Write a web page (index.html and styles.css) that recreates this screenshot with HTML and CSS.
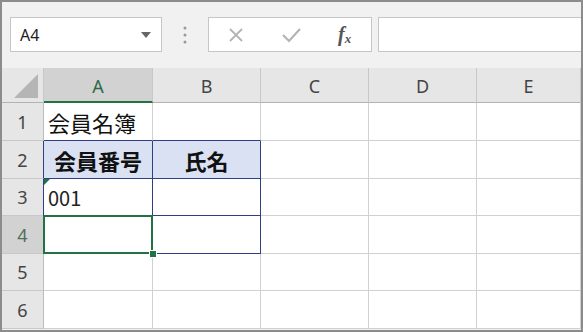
FILE: index.html
```html
<!doctype html>
<html>
    <head>
        <meta charset='utf-8'>
        <title>会員名簿</title>
        <link rel="stylesheet" href="styles.css">
    </head>
    <body>
        <div class='window'>
            <div class='toolbar'>
                <div class='namebox'>
                    <span>A4</span>
                    <svg width="10" height="6" viewBox="0 0 10 6"><path d="M0 0 L10 0 L5 6 Z" fill="#666"/></svg>
                </div>
                <div class='grip'>
                    <svg width="4" height="18" viewBox="0 0 4 18"><circle cx="2" cy="2" r="1.5" fill="#999"/><circle cx="2" cy="9" r="1.5" fill="#999"/><circle cx="2" cy="16" r="1.5" fill="#999"/></svg>
                </div>
                <div class='fxbtns'>
                    <svg width="16" height="16" viewBox="0 0 16 16"><path d="M2 2 L14 14 M14 2 L2 14" stroke="#b4b4b4" stroke-width="1.8" fill="none"/></svg>
                    <svg width="20" height="16" viewBox="0 0 20 16"><path d="M2 8 L8 14 L19 2" stroke="#b4b4b4" stroke-width="2.2" fill="none"/></svg>
                    <span class='fx'>f<sub>x</sub></span>
                </div>
                <div class='formula'></div>
            </div>
            <div class='sheet'>
                <div class='hd corner'>
                    <svg width="24" height="24" viewBox="0 0 24 24"><path d="M24 0 L24 24 L0 24 Z" fill="#b5b5b5"/></svg>
                </div>
                <div class='hd col active'>A</div>
                <div class='hd col'>B</div>
                <div class='hd col'>C</div>
                <div class='hd col'>D</div>
                <div class='hd col'>E</div>

                <div class='hd row'>1</div>
                <div class='cell tb-top'>会員名簿</div>
                <div class='cell tb-top'></div>
                <div class='cell'></div>
                <div class='cell'></div>
                <div class='cell'></div>

                <div class='hd row tb-left'>2</div>
                <div class='cell tb th'>会員番号</div>
                <div class='cell tb th'>氏名</div>
                <div class='cell'></div>
                <div class='cell'></div>
                <div class='cell'></div>

                <div class='hd row tb-left'>3</div>
                <div class='cell tb num'>001</div>
                <div class='cell tb'></div>
                <div class='cell'></div>
                <div class='cell'></div>
                <div class='cell'></div>

                <div class='hd row active'>4</div>
                <div class='cell tb selected'></div>
                <div class='cell tb'></div>
                <div class='cell'></div>
                <div class='cell'></div>
                <div class='cell'></div>

                <div class='hd row'>5</div>
                <div class='cell'></div>
                <div class='cell'></div>
                <div class='cell'></div>
                <div class='cell'></div>
                <div class='cell'></div>

                <div class='hd row'>6</div>
                <div class='cell'></div>
                <div class='cell'></div>
                <div class='cell'></div>
                <div class='cell'></div>
                <div class='cell'></div>
            </div>
        </div>
    </body>
</html>
```
FILE: styles.css
```css
html,body {
    margin:0;
    padding:0;
}
body {
    font-family:'Noto Sans','Noto Sans CJK JP',sans-serif;
    background:#fff;
}
.window {
    width:583px;
    height:332px;
    box-sizing:border-box;
    border:2px solid #8c8c8c;
    background:#f1f1f1;
    overflow:hidden;
}
.toolbar {
    height:66px;
    box-sizing:border-box;
    padding:15px 0 0 8px;
    display:flex;
    align-items:flex-start;
}
.namebox {
    width:152px;
    height:35px;
    box-sizing:border-box;
    border:1px solid #c6c6c6;
    background:#fff;
    display:flex;
    align-items:center;
    justify-content:space-between;
    padding:0 10px 0 9px;
    font-size:16px;
    color:#222;
}
.grip {
    width:46px;
    height:35px;
    display:flex;
    align-items:center;
    justify-content:center;
}
.fxbtns {
    width:164px;
    height:35px;
    box-sizing:border-box;
    border:1px solid #c6c6c6;
    background:#fff;
    display:flex;
    align-items:center;
    padding:0 0 0 19px;
    gap:37px;
}
.fx {
    font-family:'Liberation Serif',serif;
    font-style:italic;
    font-weight:bold;
    font-size:20px;
    color:#555;
}
.fx sub {
    font-size:13px;
    vertical-align:-2px;
}
.formula {
    flex:1;
    height:35px;
    box-sizing:border-box;
    margin-left:6px;
    border:1px solid #c6c6c6;
    border-right:none;
    background:#fff;
}
.sheet {
    display:grid;
    grid-template-columns:42px 109px 108px 108px 108px 1fr;
    grid-template-rows:35px 38px 38px 37px 38px 37px 38px;
    background:#fff;
}
.sheet > div {
    box-sizing:border-box;
    border-right:1px solid #d0d0d0;
    border-bottom:1px solid #d0d0d0;
}
.sheet .hd {
    background:#e6e6e6;
    color:#444;
    font-size:18px;
    display:flex;
    align-items:center;
    justify-content:center;
}
.sheet .col {
    border-right-color:#c8c8c8;
    border-bottom:1px solid #b3b3b3;
    padding-top:2px;
}
.sheet .col.active {
    background:#d2d2d2;
    border-bottom:2px solid #217346;
    color:#2d6a48;
}
.sheet .corner {
    justify-content:flex-end;
    align-items:flex-end;
    padding:0 5px 4px 0;
    border-bottom:1px solid #b3b3b3;
    border-right-color:#c8c8c8;
}
.sheet .corner svg {
    display:block;
}
.sheet .row {
    border-right:1px solid #bcbcbc;
    border-bottom-color:#c8c8c8;
}
.sheet .row.active {
    background:#d2d2d2;
    color:#4f6f5e;
}
.sheet .row.tb-left {
    border-right-color:#2e3f82;
}
.cell {
    font-family:'Noto Sans CJK JP',sans-serif;
    font-size:22px;
    color:#111;
    display:flex;
    align-items:center;
    padding-left:4px;
    position:relative;
}
.cell.tb-top {
    border-bottom-color:#2e3f82;
}
.cell.tb {
    border-right-color:#2e3f82;
    border-bottom-color:#2e3f82;
}
.cell.th {
    background:#d9e1f2;
    font-weight:bold;
    justify-content:center;
    padding-left:0;
}
.cell.num {
    font-size:20px;
    color:#222;
}
.cell.num:before {
    content:'';
    position:absolute;
    left:0;
    top:0;
    border-top:6px solid #217346;
    border-right:6px solid transparent;
}
.cell.selected:after {
    content:'';
    position:absolute;
    top:-1px;
    left:-1px;
    right:-1px;
    bottom:-1px;
    border:2px solid #217346;
    z-index:2;
}
.cell.selected:before {
    content:'';
    position:absolute;
    right:-5px;
    bottom:-5px;
    width:6px;
    height:6px;
    background:#217346;
    border:1px solid #fff;
    z-index:3;
}
```
